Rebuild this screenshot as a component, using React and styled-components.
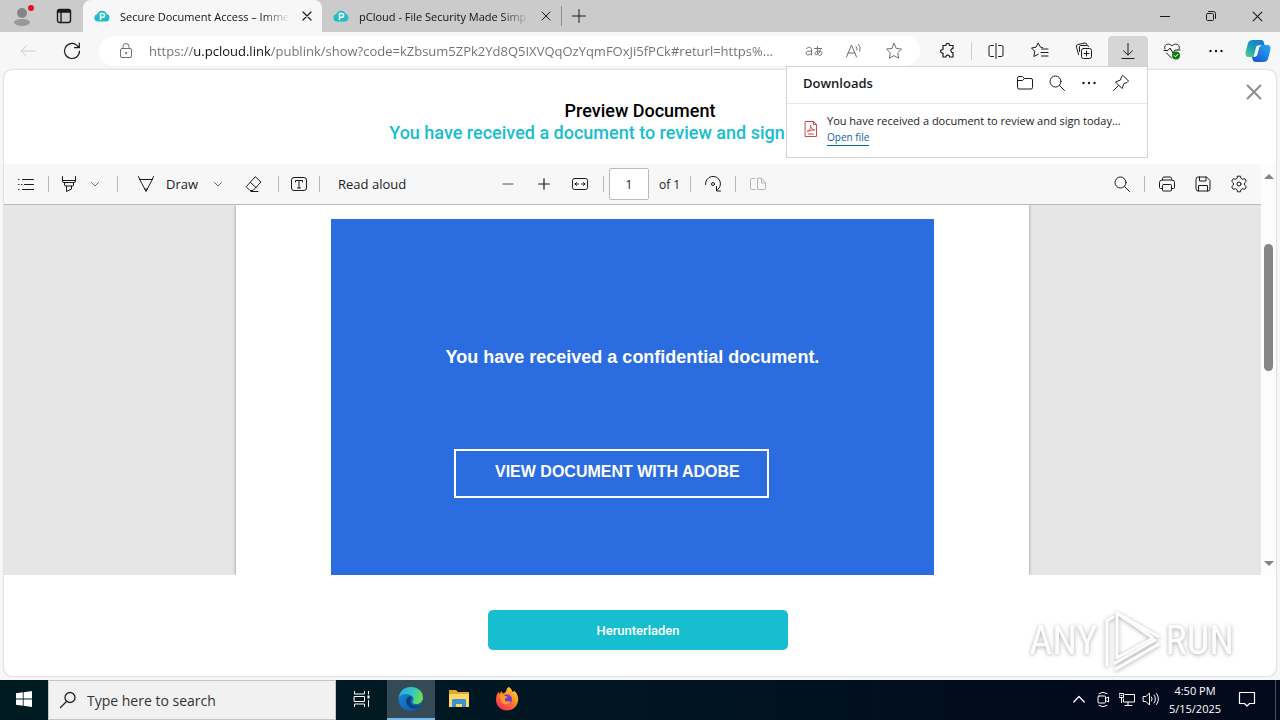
import React from "react"
import styled, { createGlobalStyle } from "styled-components"

const ui = `"Open Sans", "Noto Sans", sans-serif`

const GlobalStyle = createGlobalStyle`
  * { box-sizing: border-box; }
  body {
    margin: 0;
    font-family: ${ui};
    font-size: 12px;
    color: #1b1b1b;
  }
  button, input { font: inherit; color: inherit; }
  button { border: 0; background: none; padding: 0; }
`

/* Shell */

const Desktop = styled.div`
  min-height: 100vh;
  display: flex;
  flex-direction: column;
  background: #f7f7f7;
  overflow: hidden;
`

const Browser = styled.div`
  position: relative;
  flex: 1;
  display: flex;
  flex-direction: column;
`

const Svg = styled.svg`
  display: block;
  flex: none;
  fill: none;
  stroke: currentColor;
  stroke-width: ${(p) => p.$weight || 1};
  stroke-linecap: round;
  stroke-linejoin: round;
`

/* Tabs */

const TabStrip = styled.div`
  display: flex;
  height: 32px;
  background: #cbcbcb;
`

const StripButton = styled.button`
  width: ${(p) => p.$width}px;
  display: flex;
  align-items: center;
  justify-content: center;
`

const Tab = styled.div`
  width: 239px;
  display: flex;
  align-items: center;
  gap: 10px;
  padding: 0 8px 0 11px;
  border-radius: 8px 8px 0 0;
  background: ${(p) => (p.$active ? "#f7f7f7" : "transparent")};
`

const TabTitle = styled.span`
  flex: 1;
  font-size: 11px;
  white-space: nowrap;
  color: #111;
  mask-image: linear-gradient(to right, #000 84%, transparent);
`

const TabClose = styled.button`
  width: 14px;
  height: 14px;
  display: flex;
  align-items: center;
  justify-content: center;
`

const TabDivider = styled.span`
  width: 1px;
  height: 20px;
  margin-top: 6px;
  background: #8b8b8b;
`

const Spacer = styled.div`
  flex: 1;
`

/* Address row */

const Toolbar = styled.div`
  display: flex;
  align-items: center;
  height: 38px;
  padding: 0 4px 0 8px;
`

const ToolButton = styled.button`
  width: 40px;
  height: 30px;
  margin-right: 4px;
  display: flex;
  align-items: center;
  justify-content: center;
  border-radius: 4px 4px 0 0;
  color: ${(p) => (p.$faded ? "#c8c8c8" : "#1b1b1b")};
  background: ${(p) => (p.$pressed ? "#d6d6d6" : "transparent")};
`

const CopilotButton = styled(ToolButton)`
  width: 36px;
  margin-right: 0;
`

const ToolDivider = styled.span`
  width: 1px;
  height: 18px;
  margin: 0 4px 0 -1px;
  background: #cfcfcf;
`

const AddressBar = styled.div`
  flex: 1;
  display: flex;
  align-items: center;
  height: 30px;
  margin: 0 8px 0 3px;
  padding: 0 6px 0 18px;
  border-radius: 15px;
  background: #fff;
  color: #6f6f6f;
`

const Url = styled.input`
  flex: 1;
  min-width: 0;
  margin-left: 14px;
  padding: 0;
  border: 0;
  outline: 0;
  font-size: 13px;
  color: transparent;
  background: linear-gradient(to right, #6f6f6f 45px, #111 45px, #111 121px, #6f6f6f 121px);
  background-clip: text;
`

const AddressButton = styled.button`
  width: 40px;
  height: 28px;
  display: flex;
  align-items: center;
  justify-content: center;
`

/* Downloads flyout */

const Flyout = styled.section`
  position: absolute;
  top: 66px;
  right: 132px;
  width: 362px;
  border: 1px solid #d3d3d3;
  background: #fff;
`

const FlyoutHeader = styled.header`
  display: flex;
  align-items: center;
  height: 37px;
  padding: 0 10px 4px 16px;
  border-bottom: 1px solid #e6e6e6;
`

const FlyoutTitle = styled.h2`
  flex: 1;
  margin: 0;
  font-size: 13px;
  font-weight: 600;
`

const FlyoutButton = styled.button`
  width: 32px;
  height: 28px;
  display: flex;
  align-items: center;
  justify-content: center;
`

const DownloadRow = styled.div`
  display: flex;
  align-items: center;
  gap: 9px;
  height: 53px;
  padding: 0 16px 4px 17px;
`

const DownloadText = styled.div`
  flex: 1;
  min-width: 0;
  white-space: nowrap;
`

const FileName = styled.div`
  font-size: 11px;
  line-height: 18px;
`

const OpenLink = styled.a`
  display: block;
  width: fit-content;
  font-size: 10px;
  line-height: 15px;
  color: #0f62a8;
  text-decoration: none;
  border-bottom: 1px solid #0f62a8;
`

/* Web page */

const Page = styled.main`
  flex: 1;
  display: flex;
  flex-direction: column;
  margin: 0 4px 4px;
  border-radius: 8px;
  background: #fff;
  box-shadow: 0 0 2px rgba(0, 0, 0, 0.3);
  font-family: Roboto, sans-serif;
`

const PageHeader = styled.header`
  position: relative;
  height: 94px;
  padding-top: 30px;
  font-size: 18px;
  line-height: 22px;
  text-align: center;
`

const Heading = styled.h1`
  margin: 0;
  font-size: inherit;
  font-weight: 500;
  color: #000;
`

const DocName = styled.p`
  margin: 0;
  padding-right: 106px;
  font-weight: 500;
  color: #17bed0;
`

const CloseButton = styled.button`
  position: absolute;
  top: 14px;
  right: 14px;
  color: #8e8e8e;
`

const Viewer = styled.div`
  flex: 1;
  display: flex;
`

const PdfPane = styled.div`
  flex: 1;
  display: flex;
  flex-direction: column;
  font-family: ${ui};
`

const PdfBar = styled.div`
  display: flex;
  align-items: center;
  height: 41px;
  border-bottom: 1px solid #b9b9b9;
  background: #f7f7f7;
`

const BarGroup = styled.div`
  flex: ${(p) => (p.$side ? 1 : "none")};
  display: flex;
  align-items: center;
  justify-content: ${(p) => (p.$side === "right" ? "flex-end" : "flex-start")};
  padding: ${(p) => (p.$side === "right" ? "0 4px 0 0" : p.$side ? "0 0 0 8px" : "0 4px 0 0")};
`

const BarButton = styled.button`
  min-width: ${(p) => p.$width || 36}px;
  height: 32px;
  display: flex;
  align-items: center;
  justify-content: center;
  gap: 10px;
  font-size: 13px;
  white-space: nowrap;
  color: ${(p) => (p.$faded ? "#b5b5b5" : "#1b1b1b")};
`

const TextButton = styled(BarButton)`
  min-width: 0;
  padding-left: 10px;
`

const BarDivider = styled.span`
  width: 1px;
  height: 16px;
  margin: 0 ${(p) => p.$space || 8}px;
  background: #b9b9b9;
`

const PageInput = styled.input`
  width: 40px;
  height: 32px;
  padding: 0;
  border: 1px solid #b9b9b9;
  border-radius: 2px;
  background: #fff;
  text-align: center;
`

const PageTotal = styled.label`
  min-width: 36px;
  padding-left: 10px;
`

const Canvas = styled.div`
  flex: 1;
  display: flex;
  justify-content: center;
  background: #e6e6e6;
`

const Sheet = styled.article`
  width: 793px;
  display: flex;
  padding: 14px 95px 0;
  background: #fff;
  box-shadow: 0 0 3px rgba(0, 0, 0, 0.4);
  clip-path: inset(0 -6px);
`

const Panel = styled.div`
  flex: 1;
  display: flex;
  flex-direction: column;
  align-items: flex-start;
  padding: 127px 0 77px;
  background: #2b6de0;
  color: #fff;
  font-family: "Liberation Sans", Arial, sans-serif;
  font-weight: 700;
`

const PanelText = styled.p`
  align-self: center;
  margin: 0 0 81px;
  font-size: 18px;
  line-height: 22px;
`

const PanelLink = styled.a`
  width: 315px;
  margin-left: 123px;
  padding: 0 0 4px 39px;
  border: 2px solid #fff;
  color: inherit;
  font-size: 16px;
  line-height: 41px;
  text-decoration: none;
`

const Scrollbar = styled.div`
  width: 15px;
  display: flex;
  flex-direction: column;
  align-items: center;
  padding: 8px 0 7px;
  color: #848484;
  background: #fcfcfc;
`

const Track = styled.div`
  flex: 1;
  padding-top: 62px;
`

const Thumb = styled.div`
  width: 9px;
  height: 127px;
  border-radius: 5px;
  background: #858585;
`

const PageFooter = styled.footer`
  display: flex;
  justify-content: center;
  padding: 35px 4px 26px 0;
`

const DownloadButton = styled.button`
  width: 300px;
  height: 40px;
  border-radius: 5px;
  background: #17bed0;
  color: #fff;
  font-size: 13px;
  font-weight: 500;
`

const Watermark = styled.div`
  position: absolute;
  right: 46px;
  bottom: 7px;
  display: flex;
  align-items: center;
  gap: 5px;
  color: rgba(255, 255, 255, 0.95);
  font: 400 40px/64px "Liberation Sans Narrow", "Roboto Condensed", "Liberation Sans", sans-serif;
  filter: drop-shadow(0 1px 2px rgba(0, 0, 0, 0.35));
  pointer-events: none;
`

/* Taskbar */

const Taskbar = styled.footer`
  display: flex;
  height: 40px;
  background: linear-gradient(to right, #001a22, #001722 45%, #020a1c 85%);
  color: #fff;
`

const TaskButton = styled.button`
  width: ${(p) => p.$width || 48}px;
  display: flex;
  align-items: center;
  justify-content: center;
  border-bottom: 2px solid ${(p) => (p.$active ? "#76b9ed" : "transparent")};
  background: ${(p) => (p.$active ? "#344b55" : "transparent")};
`

const TaskSearch = styled.label`
  width: 288px;
  display: flex;
  align-items: center;
  gap: 10px;
  padding: 0 10px;
  border: 1px solid #c4c4c4;
  background: #f1f1f1;
  color: #222;
`

const SearchInput = styled.input`
  flex: 1;
  min-width: 0;
  padding: 0;
  border: 0;
  outline: 0;
  background: none;
  font-size: 14px;
  &::placeholder { color: #333; opacity: 1; }
`

const Clock = styled.div`
  width: 64px;
  padding-top: 2px;
  font-size: 11px;
  line-height: 18px;
  text-align: center;
`

const DesktopEdge = styled.span`
  width: 5px;
  margin-left: 8px;
  border-left: 1px solid #4a5362;
`

/* Icons */

const Icon = ({ size = 20, box = 20, weight, children }) => (
  <Svg width={size} height={size} viewBox={`0 0 ${box} ${box}`} $weight={weight} aria-hidden="true">
    {children}
  </Svg>
)

const Cross = ({ size = 10, weight = 1 }) => (
  <Icon size={size} box={10} weight={weight}><path d="M1 1l8 8M9 1l-8 8" /></Icon>
)

const Cloud = () => (
  <Icon size={16} box={16}>
    <path d="M4 13.500a3.700 3.700 0 0 1-.7-7.300A5 5 0 0 1 12.700 5.900 3.900 3.900 0 0 1 12 13.500z" fill="#1fbccb" stroke="none" />
    <path d="M6.500 11.500V5.500h2.200a1.900 1.900 0 0 1 0 3.800H6.500" stroke="#fff" strokeWidth="1.500" />
  </Icon>
)

const Magnifier = ({ size = 18 }) => (
  <Icon size={size} box={18}><circle cx="7.500" cy="7.500" r="5.500" /><path d="M11.500 11.500L16.500 16.500" /></Icon>
)

const Dots = () => (
  <Icon>
    <g fill="currentColor" stroke="none">
      <circle cx="4.500" cy="10" r="1.200" /><circle cx="10" cy="10" r="1.200" /><circle cx="15.500" cy="10" r="1.200" />
    </g>
  </Icon>
)

const Chevron = () => (
  <Icon size={10} box={10}><path d="M1.500 3.500L5 7l3.500-3.500" stroke="#6b6b6b" /></Icon>
)

const Copilot = () => (
  <Svg width="26" height="26" viewBox="0 0 26 26" aria-hidden="true">
    <defs>
      <linearGradient id="cpA" x1="0" y1="1" x2="1" y2="0">
        <stop offset="0" stopColor="#55d48a" /><stop offset=".5" stopColor="#1798bd" /><stop offset="1" stopColor="#1670d6" />
      </linearGradient>
      <linearGradient id="cpB" x1="0" y1="1" x2="1" y2="0">
        <stop offset="0" stopColor="#1750d0" /><stop offset="1" stopColor="#2aa9f5" />
      </linearGradient>
    </defs>
    <g stroke="none">
      <path d="M8 2h8c2 0 2.500 1 3 3l.600 2h-3c-2 0-3 1-3.500 3l-1.600 6c-.600 2-1.500 3-3.500 3H4c-3 0-4-2-3.300-5l2-8C3.500 3.500 5 2 8 2z" fill="url(#cpA)" />
      <path d="M18 24h-7c-2.500 0-3-1-3.500-3L7 19h2c2 0 3-1 3.500-3L14 10c.600-2 1.500-3 3.500-3H22c3 0 4 2 3.300 5l-2 8c-.800 3-2.300 4-5.300 4z" fill="url(#cpB)" />
      <path d="M12.500 7.500h4c-1.500.500-2.300 1.500-2.800 3l-1.500 5.500c-.500 1.700-1.500 2.700-3.200 2.700H8.500L11 9.500c.300-1 .700-1.600 1.500-2z" fill="#fff" />
    </g>
  </Svg>
)

const EdgeLogo = () => (
  <Svg width="26" height="26" viewBox="0 0 26 26" aria-hidden="true">
    <defs>
      <linearGradient id="edA" x1="0" y1="0" x2="1" y2=".3">
        <stop offset="0" stopColor="#2aa8e4" /><stop offset=".6" stopColor="#34c6c0" /><stop offset="1" stopColor="#6bdc5a" />
      </linearGradient>
      <linearGradient id="edB" x1="0" y1="0" x2="1" y2="1">
        <stop offset="0" stopColor="#1b8ee0" /><stop offset="1" stopColor="#0c4f9f" />
      </linearGradient>
    </defs>
    <g stroke="none">
      <circle cx="12.500" cy="13" r="12" fill="url(#edB)" />
      <path d="M1 11C2 4.500 7 1 13 1c7 0 12 4.500 12 10.500 0 4-3 6.500-6.500 6.500-3 0-4.500-1-4-2 1.500-2 1.500-4 0-5.500C11.500 7 4 7 1 11z" fill="url(#edA)" />
      <path d="M10 11c-3 3-2 8 2 10.500 3 1.700 7 1.500 11-2-4 1.500-8.500.700-10-2.500-.900-2-.500-4 1-5.500-1-1.500-3-1.500-4-.500z" fill="#0d3f78" />
    </g>
  </Svg>
)

const Folder = () => (
  <Svg width="22" height="20" viewBox="0 0 22 20" aria-hidden="true">
    <g stroke="none">
      <path d="M1 1h7l2 2h11v15H1z" fill="#e5a52c" />
      <path d="M1 5h20v13H1z" fill="#fcd765" />
      <path d="M4 18v-6.500q0-1.500 1.500-1.500h11q1.500 0 1.500 1.500V18h-4v-3H8v3z" fill="#3f91cf" />
    </g>
  </Svg>
)

const Firefox = () => (
  <Svg width="24" height="24" viewBox="0 0 24 24" aria-hidden="true">
    <defs>
      <linearGradient id="ffA" x1=".9" y1="0" x2=".2" y2="1">
        <stop offset="0" stopColor="#ffe03a" /><stop offset=".45" stopColor="#ff8a22" /><stop offset="1" stopColor="#f5275f" />
      </linearGradient>
    </defs>
    <g stroke="none">
      <path d="M14 0c2 1.500 3 3 3.500 5 1-.300 1.500-.800 1.500-1.500 3 2.500 4.500 6 4.200 9.500C22.700 19 18 23.500 12 23.500S1 19 1 13c0-3 .700-6 2.500-8.500L4 7l3-3 .500 2.500C10 6 11.500 4.500 11.500 3S12.500.800 14 0z" fill="url(#ffA)" />
      <circle cx="12" cy="12.500" r="5" fill="#7b3bd0" />
      <path d="M4 9c2-2 4-2 6 0l2.500.500c0 1-1.500 1.500-2.500 2-.500 2 1 3.500 3 3 2-.600 3 .500 2 1.500-2.500 2.500-8 2-9-2.500z" fill="#ff9a2a" />
    </g>
  </Svg>
)

/* Parts */

const Tabs = () => (
  <TabStrip>
    <StripButton $width={44} aria-label="Profile">
      <Svg width="26" height="26" viewBox="0 0 26 26" aria-hidden="true">
        <g stroke="none">
          <circle cx="13" cy="10" r="5" fill="#858585" />
          <path d="M5 20c0-3 3-4 8-4s8 1 8 4c-1.500 2-4 3-8 3s-6.500-1-8-3z" fill="#999" />
          <circle cx="22" cy="5" r="3" fill="#e81123" />
        </g>
      </Svg>
    </StripButton>
    <StripButton $width={39} aria-label="Tab actions">
      <Icon size={16} box={16} weight={1.4}>
        <rect x="1.500" y="1.500" width="13" height="13" rx="2" />
        <path d="M1.500 4h13M5 4v10.500M2 2.500h12" />
      </Icon>
    </StripButton>
    <Tab $active>
      <Cloud />
      <TabTitle>Secure Document Access – Imme</TabTitle>
      <TabClose aria-label="Close tab"><Cross weight={1.2} /></TabClose>
    </Tab>
    <Tab>
      <Cloud />
      <TabTitle>pCloud - File Security Made Simp</TabTitle>
      <TabClose aria-label="Close tab"><Cross /></TabClose>
    </Tab>
    <TabDivider />
    <StripButton $width={34} aria-label="New tab">
      <Icon size={14} box={14}><path d="M7 .500v13M.500 7h13" /></Icon>
    </StripButton>
    <Spacer />
    <StripButton $width={46} aria-label="Minimize">
      <Icon size={10} box={10}><path d="M0 5.500h10" /></Icon>
    </StripButton>
    <StripButton $width={46} aria-label="Restore">
      <Icon size={12} box={12}>
        <rect x="1.500" y="3.500" width="7" height="7" rx="1" />
        <path d="M3.500 1.500h5a2 2 0 0 1 2 2v5" />
      </Icon>
    </StripButton>
    <StripButton $width={46} aria-label="Close"><Cross size={11} /></StripButton>
  </TabStrip>
)

const AddressRow = () => (
  <Toolbar>
    <ToolButton $faded aria-label="Back">
      <Icon size={18}><path d="M18 10H2.500M8.500 4l-6 6 6 6" /></Icon>
    </ToolButton>
    <ToolButton aria-label="Refresh">
      <Icon weight={1.2}><path d="M17.500 10a7.500 7.500 0 1 1-2.500-5.600L17 6.500M17.300 2v4.700h-4.800" /></Icon>
    </ToolButton>
    <AddressBar>
      <Icon size={18} box={18}>
        <rect x="3.500" y="6.500" width="11" height="9" rx="1.500" />
        <path d="M6 6.500V4.500a3 3 0 0 1 6 0v2" />
        <circle cx="9" cy="11" r=".6" fill="currentColor" />
      </Icon>
      <Url
        aria-label="Address"
        defaultValue="https://u.pcloud.link/publink/show?code=kZbsum5ZPk2Yd8Q5IXVQqOzYqmFOxJi5fPCk#returl=https%..."
      />
      <AddressButton aria-label="Translate">
        <Icon>
          <path d="M2.500 7.500c1-1.500 5-2 5 1V14M7.500 10C4 10 2 10.500 2 12.200c0 2.500 4 2.300 5.500 0" />
          <path d="M10.500 7.500h7M13.500 5.500c-.300 3-.200 6 .500 8M16.500 9c-1 4-5.500 6.500-5.500 3.500 0-2.500 7-3.500 7-.300 0 1.300-1 2-2.500 2.300" />
        </Icon>
      </AddressButton>
      <AddressButton aria-label="Read this page aloud">
        <Icon>
          <path d="M2.500 16L7.500 4l5 12M4 12h7M12 5.500q1.500 1.500.800 3.500M14.500 3.500q2.800 3 1.300 6.500" />
        </Icon>
      </AddressButton>
      <AddressButton aria-label="Add to favorites">
        <Icon><path d="M10 2.500l2.300 4.900 5.200.7-3.800 3.700 1 5.400L10 14.600l-4.700 2.600 1-5.400L2.500 8.100l5.200-.7z" /></Icon>
      </AddressButton>
    </AddressBar>
    <ToolButton aria-label="Extensions">
      <Icon weight={1.2}>
        <path d="M5 4.500h3c-.600-3 4-3 3.500 0H15v3.200c-2.800-.500-2.800 4.300 0 3.800v4.500h-3.500c.500-2.500-4-2.500-3.500 0H5v-4c-3.200.500-3.200-3.800 0-3.500z" />
      </Icon>
    </ToolButton>
    <ToolDivider />
    <ToolButton aria-label="Split screen">
      <Icon>
        <path d="M10 2.500v15M7.500 4.500h-3a1.500 1.500 0 0 0-1.500 1.500v8a1.500 1.500 0 0 0 1.500 1.500h3M12.500 4.500h3A1.500 1.500 0 0 1 17 6v8a1.500 1.500 0 0 1-1.500 1.500h-3" />
      </Icon>
    </ToolButton>
    <ToolButton aria-label="Favorites">
      <Icon>
        <path d="M12.500 6.500l-2-.300L8.200 2 6 6.200l-4.500.800 3.200 3.200-.8 5.300 4.300-2.300M11.500 8h6.500M11 11.500h7M11.500 15h6.500" />
      </Icon>
    </ToolButton>
    <ToolButton aria-label="Collections">
      <Icon>
        <rect x="7.500" y="7.500" width="10" height="10" rx="2" />
        <path d="M12.500 10v5M10 12.500H15M4.500 13.500L2.500 6a2 2 0 0 1 1.500-2.500l7-1.500a2 2 0 0 1 2 1.500M5.500 10.500v-5a1 1 0 0 1 1-1h7a1 1 0 0 1 1 1" />
      </Icon>
    </ToolButton>
    <ToolButton $pressed aria-label="Downloads">
      <Icon><path d="M10 2.500V14M5.500 9.700L10 14l4.500-4.300M4 17.500h12" /></Icon>
    </ToolButton>
    <ToolButton aria-label="Browser essentials">
      <Icon>
        <path d="M3 8C1 4 6.500 1 10 5c3.500-4 9-1 7 3M2 9.500h4L8 7l3 5 2-3h5M4.500 12l5 5" />
        <circle cx="14" cy="14.500" r="4" fill="#107c10" stroke="none" />
        <path d="M12.200 14.500l1.300 1.300 2.300-2.500" stroke="#fff" />
      </Icon>
    </ToolButton>
    <ToolButton aria-label="Settings and more"><Dots /></ToolButton>
    <CopilotButton aria-label="Copilot"><Copilot /></CopilotButton>
  </Toolbar>
)

const Downloads = () => (
  <Flyout>
    <FlyoutHeader>
      <FlyoutTitle>Downloads</FlyoutTitle>
      <FlyoutButton aria-label="Open downloads folder">
        <Icon size={18} box={18}>
          <path d="M1.500 4A1.500 1.500 0 0 1 3 2.500h3.500l2 2H15A1.500 1.500 0 0 1 16.500 6v7.500A1.500 1.500 0 0 1 15 15H3a1.500 1.500 0 0 1-1.500-1.500zM1.500 6.500h5l2-2" />
        </Icon>
      </FlyoutButton>
      <FlyoutButton aria-label="Search downloads"><Magnifier /></FlyoutButton>
      <FlyoutButton aria-label="More options"><Dots /></FlyoutButton>
      <FlyoutButton aria-label="Pin downloads">
        <Icon><path d="M12 2.500l5.500 5.500-1.500 1.500-3 1-2 5-6.500-6.500 5-2 1-3zM7.500 12.500L2.500 17.500" /></Icon>
      </FlyoutButton>
    </FlyoutHeader>
    <DownloadRow>
      <Svg width="14" height="16" viewBox="0 0 14 16" color="#d2464a" aria-hidden="true">
        <path d="M1.500.500h8l3 3v12h-11zM9.500.500v3h3M3.500 10c3-1 3.500-4 3.200-5.500M6.700 5c.300 2.500 2 4 4 4-2 0-4.500.300-7 1.500M4.500 13h5" />
      </Svg>
      <DownloadText>
        <FileName>You have received a document to review and sign today...</FileName>
        <OpenLink href="#open">Open file</OpenLink>
      </DownloadText>
    </DownloadRow>
  </Flyout>
)

const PdfToolbar = () => (
  <PdfBar>
    <BarGroup $side="left">
      <BarButton $width={28} aria-label="Contents">
        <Icon size={18} box={18}>
          <path d="M5.500 4.500h11M7.500 9.500h9M5.500 14.500h11M1.500 4.500h.500M1.500 9.500h.500M4.500 9.500H5M1.500 14.500h.500" />
        </Icon>
      </BarButton>
      <BarDivider />
      <BarButton $width={24} aria-label="Highlight">
        <Icon size={18} box={18}>
          <path d="M2.500 1.500V6a1.500 1.500 0 0 0 1.500 1.500h10A1.500 1.500 0 0 0 15.500 6V1.500M2.500 5.500h13M4.500 7.500v2.500a1 1 0 0 0 1 1h7a1 1 0 0 0 1-1V7.500M6.500 11v5.500l5-2.500v-3" />
        </Icon>
      </BarButton>
      <BarButton $width={28} aria-label="Highlight colors"><Chevron /></BarButton>
      <BarDivider />
      <TextButton>
        <Icon><path d="M2.500 2.500L4 6l6 11.500L16 6l1.500-3.500M3.500 5.500h13M8.700 15h2.600" /></Icon>
        Draw
      </TextButton>
      <BarButton $width={40} aria-label="Draw options"><Chevron /></BarButton>
      <BarButton $width={32} aria-label="Erase">
        <Icon size={18} box={18}>
          <path d="M10.500 2l5.500 5-8 8.500H5L1.500 12zM5.500 7.500l5.500 5M6 16.500h7" />
        </Icon>
      </BarButton>
      <BarDivider />
      <BarButton $width={24} aria-label="Add text">
        <Icon size={18} box={18}>
          <rect x="1.500" y="2.500" width="15" height="13" rx="2.500" />
          <path d="M5.500 7V5.500h7V7M9 5.500v7.500M7.500 13h3" />
        </Icon>
      </BarButton>
      <BarDivider />
      <TextButton>Read aloud</TextButton>
    </BarGroup>
    <BarGroup>
      <BarButton aria-label="Zoom out">
        <Icon size={12} box={12}><path d="M1 6h10" stroke="#555" /></Icon>
      </BarButton>
      <BarButton aria-label="Zoom in">
        <Icon size={12} box={12} weight={1.2}><path d="M6 .800v10.400M.800 6h10.400" /></Icon>
      </BarButton>
      <BarButton aria-label="Fit to width">
        <Icon size={18} box={18}>
          <rect x="1.500" y="3.500" width="15" height="11" rx="2" />
          <path d="M4 9h3.500M10.500 9H14M5.500 7.500L4 9l1.500 1.500M12.500 7.500L14 9l-1.500 1.500" />
        </Icon>
      </BarButton>
      <BarDivider $space={5} />
      <PageInput id="page-number" defaultValue="1" />
      <PageTotal htmlFor="page-number">of 1</PageTotal>
      <BarDivider $space={5} />
      <BarButton $width={34} aria-label="Rotate">
        <Icon size={18} box={18}>
          <path d="M1.500 9.500a7.500 7.500 0 1 1 11 6M12.500 11.500v4.500h4" />
          <circle cx="9" cy="9" r="1.500" />
        </Icon>
      </BarButton>
      <BarDivider $space={5} />
      <BarButton $width={34} $faded aria-label="Page view">
        <Icon size={18} box={18}>
          <path d="M8.500 3.500v11h7a1 1 0 0 0 1-1V8l-4-4.500zM12.500 3.500V8h4M6 3.500H2.500a1 1 0 0 0-1 1v9a1 1 0 0 0 1 1H6" />
        </Icon>
      </BarButton>
    </BarGroup>
    <BarGroup $side="right">
      <BarButton aria-label="Find"><Magnifier /></BarButton>
      <BarDivider $space={4} />
      <BarButton aria-label="Print">
        <Icon size={18} box={18}>
          <path d="M4.500 5V3.500A1.500 1.500 0 0 1 6 2h6a1.500 1.500 0 0 1 1.500 1.500V5M4.500 13.500H2.500a1 1 0 0 1-1-1V7.500A2.500 2.500 0 0 1 4 5h10a2.500 2.500 0 0 1 2.500 2.500v5a1 1 0 0 1-1 1h-2" />
          <rect x="4.500" y="9.500" width="9" height="6.500" rx="1" />
        </Icon>
      </BarButton>
      <BarButton aria-label="Save">
        <Icon size={18} box={18}>
          <path d="M2 4a2 2 0 0 1 2-2h8.500L16 5.500V14a2 2 0 0 1-2 2H4a2 2 0 0 1-2-2zM5.500 2v4h6.500V2M4.500 16v-5.500h9V16" />
        </Icon>
      </BarButton>
      <BarButton aria-label="Settings">
        <Icon size={18} box={18}>
          <path d="M7.500 1.200h3l.5 2.200 1.500.9 2.200-.7 1.600 2.700-1.700 1.600v2.200l1.700 1.600-1.600 2.700-2.200-.7-1.500.9-.5 2.200h-3L7 14.600l-1.500-.9-2.200.7-1.600-2.700 1.700-1.600V7.900L1.700 6.300l1.600-2.700 2.200.7L7 3.400z" />
          <circle cx="9" cy="9" r="2" />
        </Icon>
      </BarButton>
    </BarGroup>
  </PdfBar>
)

const Brand = () => (
  <Watermark>
    ANY
    <Svg width="58" height="62" viewBox="0 0 58 62" $weight={3} aria-hidden="true">
      <path d="M14 3l41 23.500M14 3v45l36-20z" />
      <path d="M4 10v45M5 10l5-3M12 53l40-23M13 59l42-24.500" />
    </Svg>
    RUN
  </Watermark>
)

const WindowsBar = () => (
  <Taskbar>
    <TaskButton aria-label="Start">
      <Svg width="16" height="16" viewBox="0 0 16 16" aria-hidden="true">
        <path d="M0 2.300l6.800-1v6.200H0zM7.600 1.200L16 0v7.500H7.600zM0 8.400h6.800v6.300L0 13.700zM7.600 8.400H16V16l-8.400-1.200z" fill="#fff" stroke="none" />
      </Svg>
    </TaskButton>
    <TaskSearch>
      <Icon size={18} box={18} weight={1.3}><circle cx="11" cy="6.500" r="5" /><path d="M7.500 10.500L1.500 16.500" /></Icon>
      <SearchInput placeholder="Type here to search" aria-label="Search" />
    </TaskSearch>
    <TaskButton $width={51} aria-label="Task view">
      <Icon size={18} box={18}>
        <path d="M1.500 1.500V4h10V1.500M1.500 16.500V14h10v2.500M1.500 6.500h10v5h-10zM15.500 1.500V4M15.500 10.500v6" />
        <path d="M14.500 5.500h2v3h-2z" fill="#fff" stroke="none" />
      </Icon>
    </TaskButton>
    <TaskButton $active aria-label="Microsoft Edge"><EdgeLogo /></TaskButton>
    <TaskButton aria-label="File Explorer"><Folder /></TaskButton>
    <TaskButton aria-label="Firefox"><Firefox /></TaskButton>
    <Spacer />
    <TaskButton $width={24} aria-label="Show hidden icons">
      <Icon size={12} box={12} weight={1.3}><path d="M.800 9L6 3.500 11.200 9" /></Icon>
    </TaskButton>
    <TaskButton $width={24} aria-label="Meet now">
      <Icon size={16} box={16}>
        <rect x="3" y="5" width="7.500" height="7" rx="1" />
        <path d="M10.500 7.500l3-1.500v5l-3-1.500M4 2.500Q8 0 12 2.500M4 14.500q4 2.500 8 0" />
      </Icon>
    </TaskButton>
    <TaskButton $width={24} aria-label="Network">
      <Icon size={16} box={16}>
        <path d="M6 3.500h9.500v7.500h-11V8M9 11v3.500M6 14.500h7M.500 2.500h4v4h-4zM2.500 6.500v5M2 4.500h1" />
      </Icon>
    </TaskButton>
    <TaskButton $width={24} aria-label="Volume">
      <Icon size={18} box={18}>
        <path d="M1.500 6.500h2.500L7.500 3v12L4 11.500H1.500zM9.500 7q1.500 2 0 4M12 5q3 4 0 8M14.500 3.500q4 5.500 0 11" />
      </Icon>
    </TaskButton>
    <Clock>4:50 PM<br />5/15/2025</Clock>
    <TaskButton $width={40} aria-label="Notifications">
      <Icon size={18} box={18} weight={1.2}><path d="M1.500 2.500h15v11h-5L9 16l-2.500-2.500h-5z" /></Icon>
    </TaskButton>
    <DesktopEdge />
  </Taskbar>
)

const App = () => (
  <Desktop>
    <GlobalStyle />
    <Browser>
      <Tabs />
      <AddressRow />
      <Page>
        <PageHeader>
          <Heading>Preview Document</Heading>
          <DocName>You have received a document to review and sign</DocName>
          <CloseButton aria-label="Close preview"><Cross size={16} weight={1.3} /></CloseButton>
        </PageHeader>
        <Viewer>
          <PdfPane>
            <PdfToolbar />
            <Canvas>
              <Sheet>
                <Panel>
                  <PanelText>You have received a confidential document.</PanelText>
                  <PanelLink href="#view">VIEW DOCUMENT WITH ADOBE</PanelLink>
                </Panel>
              </Sheet>
            </Canvas>
          </PdfPane>
          <Scrollbar>
            <Icon size={10} box={10}><path d="M0 7l5-5 5 5z" fill="currentColor" stroke="none" /></Icon>
            <Track><Thumb /></Track>
            <Icon size={10} box={10}><path d="M0 3l5 5 5-5z" fill="currentColor" stroke="none" /></Icon>
          </Scrollbar>
        </Viewer>
        <PageFooter>
          <DownloadButton>Herunterladen</DownloadButton>
        </PageFooter>
      </Page>
      <Downloads />
      <Brand />
    </Browser>
    <WindowsBar />
  </Desktop>
)

export default App
